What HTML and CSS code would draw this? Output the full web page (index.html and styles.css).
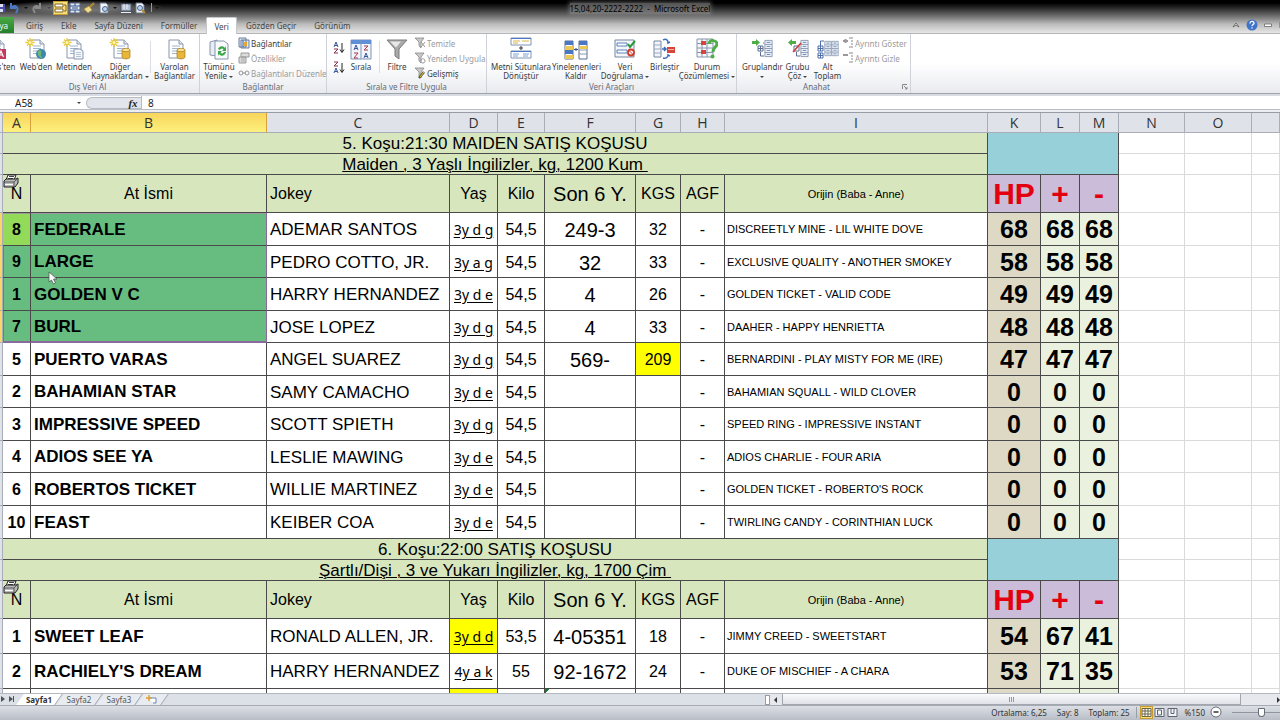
FILE: index.html
```html
<!DOCTYPE html>
<html lang="tr">
<head>
    <meta charset="utf-8">
    <title>15,04,20-2222-2222 - Microsoft Excel</title>
    <meta name="viewport" content="width=device-width, initial-scale=1">
    <link rel="stylesheet" href="styles.css">
</head>
<body>
    <!-- shared icon shapes -->
    <svg class="defs" aria-hidden="true">
        <symbol id="doc" viewBox="0 0 22 24">
            <path d="M5 3h10l4 4v14H5z" fill="#fff" stroke="#8796ad"/>
            <path d="M15 3v4h4" fill="#dfe6f0" stroke="#8796ad"/>
            <path d="M8 9h8M8 11.500h8M8 14h8M8 16.500h6" stroke="#9fb4cf"/>
        </symbol>
        <symbol id="spark" viewBox="0 0 22 24">
            <path d="M5 1v9M.5 5.500h9M2 2.500l6 6M8 2.500l-6 6" stroke="#e9c83a" stroke-width="1.300"/>
            <circle cx="5" cy="5.500" r="1.500" fill="#fff6b0"/>
        </symbol>
        <symbol id="db" viewBox="0 0 22 24">
            <path d="M13 13v7c0 2.500 8 2.500 8 0v-7z" fill="#e9b638" stroke="#a87c1e" stroke-width=".7"/>
            <ellipse cx="17" cy="13" rx="4" ry="1.700" fill="#fbe28b" stroke="#a87c1e" stroke-width=".7"/>
        </symbol>
        <symbol id="funnel" viewBox="0 0 12 12">
            <path d="M1 1h9L7 5v6L5 9V5z" fill="#c9c9c9" stroke="#888" stroke-width=".8"/>
        </symbol>
        <symbol id="rows" viewBox="0 0 10 20">
            <path d="M1 1h8v18H1zM1 5.500h8M1 10h8M1 14.500h8" fill="#eef2f8" stroke="#7c8ba3" stroke-width=".9"/>
            <path d="M3 3.200h4M3 7.700h4M3 12.200h4M3 16.700h4" stroke="#5b82c0"/>
        </symbol>
        <symbol id="printer" viewBox="0 0 16 14">
            <path d="M5 1h8l-2 5H3z" fill="#fff" stroke="#222"/>
            <path d="M6 2.500h5M5 4.500h5" stroke="#444"/>
            <path d="M1 7l2-2h10l2-1v5l-3 4H1z" fill="#b8b8b8" stroke="#222"/>
            <path d="M1 8h10l4-4M11 8v5" fill="none" stroke="#444" stroke-width=".8"/>
            <path d="M2 10.500h8" stroke="#fff"/>
        </symbol>
    </svg>

    <header class="chrome">
        <div class="title-bar">
            <div class="quick">
                <button aria-label="Kaydet"><svg width="6" height="12"><path d="M0 2h5v8H0z" fill="#4b4ba8"/><path d="M0 2h3v3H0zM0 7h3v3H0z" fill="#d8dcf4"/></svg></button>
                <button aria-label="Geri Al"><svg width="13" height="12"><path d="M3 1v5h5M3 6c4-4 9-1 5 5" fill="none" stroke="#4f78c4" stroke-width="2"/></svg></button>
                <i class="caret"></i>
                <button aria-label="Yinele"><svg width="13" height="12"><path d="M9 1v5H4M9 6C5 2 0 5 4 11" fill="none" stroke="#8a8a8a" stroke-width="2"/></svg></button>
                <i class="caret dim"></i>
                <button class="on" aria-label="Dondur"><svg width="13" height="12"><path d="M1 2h8v3H1zM1 7h8v3H1z" fill="#fff" stroke="#7a6526"/><path d="M10 3h2v6h-2" fill="none" stroke="#7a6526"/></svg></button>
                <button aria-label="Birleştir"><svg width="12" height="12"><path d="M1 1h10v10H1z" fill="#dfe6f2" stroke="#5b6980"/><path d="M1 4h10M1 8h10M6 1v3M6 8v3M3 6h6" stroke="#34538c"/></svg></button>
                <button aria-label="Biçim Boyacısı"><svg width="13" height="12"><path d="M1 7l5-3 3 4-4 3z" fill="#f1dc8c" stroke="#a58b34" stroke-width=".6"/><path d="M7 5l4-4" stroke="#b48a30" stroke-width="2"/></svg></button>
                <button aria-label="Önizleme"><svg width="12" height="12"><path d="M2 1h6l2 2v8H2z" fill="#f2f5fa" stroke="#6a7587"/><circle cx="7" cy="7" r="2.500" fill="#b9d2ee" stroke="#4a668c"/></svg></button>
                <i class="caret"></i>
                <button aria-label="Kitap"><svg width="12" height="12"><path d="M1 2h10v7H1z" fill="#b5c0d0" stroke="#48566d"/><path d="M4 2v5M7 2v5M1 10.500h10" stroke="#eef2f8"/></svg></button>
                <button aria-label="Baskı Önizleme"><svg width="12" height="12"><path d="M2 1h6l2 2v8H2z" fill="#f2f5fa" stroke="#6a7587"/><circle cx="6" cy="6" r="2.500" fill="#b9d2ee" stroke="#4a668c"/><path d="M8 8l3 3" stroke="#b48a30" stroke-width="2"/></svg></button>
                <i class="quick-end"></i>
                <i class="caret"></i>
            </div>
            <div class="title"><span>15,04,20-2222-2222 &nbsp;-&nbsp; Microsoft Excel</span></div>
        </div>
        <nav class="tabs">
            <button class="file">Dosya</button>
            <button>Giriş</button>
            <button>Ekle</button>
            <button>Sayfa Düzeni</button>
            <button>Formüller</button>
            <button class="active">Veri</button>
            <button>Gözden Geçir</button>
            <button>Görünüm</button>
            <div class="win-tools">
                <svg width="8" height="8"><path d="M1 6l3-4 3 4-3-2z" fill="#fff" stroke="#555" stroke-width=".8"/></svg>
                <svg width="12" height="12"><circle cx="6" cy="6" r="5.500" fill="#3f74c8"/><path d="M4 4.500c0-3 4-2.500 4-.3 0 1.300-2 1.300-2 2.800M6 8.200v1.400" fill="none" stroke="#fff" stroke-width="1.300"/></svg>
                <svg width="8" height="8"><path d="M.5 3h7v2.500h-7z" fill="#fff" stroke="#666" stroke-width=".8"/></svg>
                <svg width="8" height="8"><path d="M2 1h5v6H2z" fill="#fff" stroke="#666"/></svg>
            </div>
        </nav>
    </header>

    <section class="ribbon">
        <div class="group external">
            <div class="tools">
                <button class="big access"><svg width="22" height="24"><use href="#doc"/><path d="M11 12h10v10H11z" fill="#c33a5f"/><path d="M13.500 20l2.500-6 2.500 6M14.500 18h3" fill="none" stroke="#fff" stroke-width="1.200"/></svg>Access'ten</button>
                <button class="big web"><svg width="22" height="24"><use href="#doc"/><use href="#spark"/><circle cx="16" cy="17" r="5" fill="#3d86ad"/><path d="M13 14c3-2 4 1 3 3s2 3 1 4c-3 0-5-4-4-7z" fill="#6fb772"/></svg>Web'den</button>
                <button class="big text"><svg width="22" height="24"><use href="#doc"/><use href="#spark"/><path d="M12 12h6l3 2v8h-9z" fill="#f5f7fb" stroke="#8796ad"/><path d="M14 15.500h5M14 17.500h5M14 19.500h5" stroke="#b7c4d6"/></svg>Metinden</button>
                <button class="big other"><svg width="22" height="24"><use href="#doc"/><use href="#spark"/><use href="#db"/></svg>Diğer<br>Kaynaklardan <i class="caret"></i></button>
                <span class="split"></span>
                <button class="big existing"><svg width="22" height="24"><use href="#doc"/><use href="#db"/></svg>Varolan<br>Bağlantılar</button>
            </div>
            <div class="caption">Dış Veri Al</div>
        </div>
        <div class="group links">
            <div class="tools">
                <button class="big refresh"><svg width="22" height="24"><path d="M2 5l7-2v16l-7-1z" fill="#e8edf5" stroke="#8796ad"/><path d="M7 4h9l4 3v15H7z" fill="#f8fafc" stroke="#8796ad"/><path d="M10 12c1-3 5-4 7-1l1-2v5h-4l1.500-1.500c-1-2-3-1-3.500.5zM18 15c-1 4-5 5-7 2l-1 2v-5h4l-1.500 1.500c1 1.500 3 1 3.500-.5z" fill="#3da648"/></svg>Tümünü<br>Yenile <i class="caret"></i></button>
                <div class="list">
                    <button><svg width="12" height="12"><path d="M1 1h7v9H1zM3 3h8v8H3z" fill="#e3eaf5" stroke="#667a99"/><path d="M6 5v4h3V5z" fill="#e2a836"/><path d="M5 3v7" stroke="#3c60a0"/></svg>Bağlantılar</button>
                    <button disabled><svg width="12" height="12"><path d="M3 1h8v4H3zM1 5h7v6H1z" fill="#ddd" stroke="#999"/><path d="M3 7h4M3 9h4" stroke="#aaa"/></svg>Özellikler</button>
                    <button disabled><svg width="12" height="12"><path d="M1 6a2 2 0 0 1 4 0 2 2 0 0 1-4 0M7 6a2 2 0 0 1 4 0 2 2 0 0 1-4 0M4 6h4" fill="none" stroke="#999"/></svg>Bağlantıları Düzenle</button>
                </div>
            </div>
            <div class="caption">Bağlantılar</div>
        </div>
        <div class="group sorting">
            <div class="tools">
                <div class="sorts">
                    <button aria-label="A'dan Z'ye Sırala"><svg width="12" height="13"><path d="M1 6l2-5 2 5M2 4.500h2" fill="none" stroke="#35559c"/><path d="M1 8h4l-4 4h4" fill="none" stroke="#8c2f4c"/><path d="M9 2v9M7 8.500l2 3 2-3" fill="none" stroke="#222"/></svg></button>
                    <button aria-label="Z'den A'ya Sırala"><svg width="12" height="13"><path d="M1 1h4l-4 4h4" fill="none" stroke="#8c2f4c"/><path d="M1 12l2-5 2 5M2 10.500h2" fill="none" stroke="#35559c"/><path d="M9 2v9M7 8.500l2 3 2-3" fill="none" stroke="#222"/></svg></button>
                </div>
                <button class="big sort"><svg width="22" height="24"><path d="M1 3h20v19H1z" fill="#f2f5fb" stroke="#7f93b5"/><path d="M1 3h20v4H1z" fill="#5f8fd6"/><path d="M11 3v19" stroke="#7f93b5"/><path d="M4 13l2-5 2 5M4.700 11.500h2.600M14 21l2-5 2 5M14.700 19.500h2.600" fill="none" stroke="#35559c"/><path d="M4 16h4l-4 5h4M14 9h4l-4 4h4" fill="none" stroke="#a83a4c"/></svg>Sırala</button>
                <span class="split"></span>
                <button class="big filter"><svg width="22" height="24"><path d="M1 3h20l-8 9v10l-4-3v-7z" fill="#a9a9a9" stroke="#7a7a7a"/><path d="M4 4.500h11l-5 6z" fill="#e8e8e8"/></svg>Filtre</button>
                <div class="list">
                    <button disabled><svg width="12" height="12"><use href="#funnel"/><path d="M7 5l4 5M11 5l-4 5" stroke="#999"/></svg>Temizle</button>
                    <button disabled><svg width="12" height="12"><use href="#funnel"/><path d="M7 9c0-3 4-3 4 0s-4 2-4 1" fill="none" stroke="#999"/></svg>Yeniden Uygula</button>
                    <button><svg width="12" height="12"><use href="#funnel"/><path d="M5 11l5-6" stroke="#5b5522" stroke-width="2.500"/><path d="M6 10l4-5" stroke="#e2cf4a"/></svg>Gelişmiş</button>
                </div>
            </div>
            <div class="caption">Sırala ve Filtre Uygula</div>
        </div>
        <div class="group data-tools">
            <div class="tools">
                <button class="big columns"><svg width="22" height="24"><path d="M1 1h20v7H1zM1 14h20v7H1z" fill="#fff" stroke="#7f93b5"/><path d="M1 1.500h20M1 14.500h20" stroke="#4d79c4"/><path d="M3 4h7M3 6h5M12 4h7" stroke="#d9b548"/><path d="M3 17h6M3 19h5M13 17h6M13 19h5" stroke="#7da0d8"/><path d="M11 9v4M9 11h4" stroke="#333"/></svg>Metni Sütunlara<br>Dönüştür</button>
                <button class="big duplicates"><svg width="24" height="24"><path d="M1 4h8v18H1zM15 4h8v18h-8z" fill="#fff" stroke="#5c6f92"/><path d="M1 4h8v4H1zM1 13h8v4H1zM15 4h8v4h-8z" fill="#4b76c2"/><path d="M1 9h8v4H1zM1 18h8v4H1zM15 9h8v3h-8z" fill="#ecc954"/><path d="M15 13h8M15 17h8" stroke="#8a9ab5"/><path d="M10 12.500h4M12 11v3" stroke="#34538c"/></svg>Yinelenenleri<br>Kaldır</button>
                <button class="big validate"><svg width="22" height="24"><path d="M1 3h19v17H1z" fill="#f4f6fa" stroke="#77879f"/><path d="M3 6h10v3H3zM3 13h10v3H3z" fill="#fff" stroke="#5b82c0"/><path d="M14 7l2 3 5-6" fill="none" stroke="#2b9a3a" stroke-width="2"/><circle cx="17" cy="15.500" r="3" fill="#fff" stroke="#d33b2c" stroke-width="1.800"/><path d="M15 13.500l4 4" stroke="#d33b2c"/></svg>Veri<br>Doğrulama <i class="caret"></i></button>
                <button class="big merge"><svg width="22" height="24"><path d="M1 4h7v16H1z" fill="#f2f5fb" stroke="#77879f"/><path d="M1 8h7M1 12h7M1 16h7" stroke="#9aa8be"/><path d="M14 10h8v6h-8z" fill="#d9443a"/><path d="M15 12.500h6" stroke="#f4b0a8"/><path d="M9 12h4M11 10l2 2-2 2M10 3c3-2 5 0 5 3l2-1M10 21c3 1 5-1 5-3l2 1" fill="none" stroke="#3d6cb8" stroke-width="1.500"/></svg>Birleştir</button>
                <button class="big whatif"><svg width="22" height="24"><path d="M1 2h16v18H1zM1 6.500h16M1 11h16M1 15.500h16M6 2v18M11 2v18" fill="#f5f7fb" stroke="#8796ad"/><path d="M5 4h5v4H5zM5 13h5v4H5z" fill="#d9443a"/><path d="M13 7c0-5 8-4 8 0 0 3-4 3-4 8" fill="none" stroke="#4cae45" stroke-width="3"/><circle cx="16.500" cy="19.500" r="2" fill="#4cae45"/></svg>Durum<br>Çözümlemesi <i class="caret"></i></button>
            </div>
            <div class="caption">Veri Araçları</div>
        </div>
        <div class="group outline">
            <div class="tools">
                <button class="big grp"><svg width="22" height="24"><use href="#rows" x="13" y="2" width="9" height="19"/><path d="M1 4h4V2l4 3.500L5 9V7H1z" fill="#4cae45"/><path d="M7 9h5v5H7zM9.500 9v5M7 11.500h5M12 6h1M9.500 15v4H13" fill="none" stroke="#5c6f92"/></svg>Gruplandır<br><i class="caret"></i></button>
                <button class="big ungrp"><svg width="22" height="24"><use href="#rows" x="13" y="2" width="9" height="19"/><path d="M9 4H5V2L1 5.500 5 9V7h4z" fill="#4cae45"/><path d="M7 9h5v5H7zM9.500 15v4H13" fill="none" stroke="#5c6f92"/><path d="M6 15l8-9" stroke="#cf3a30" stroke-width="1.500"/></svg>Grubu<br>Çöz <i class="caret"></i></button>
                <button class="big subtotal"><svg width="22" height="24"><use href="#rows" x="7" y="2" width="8" height="19"/><use href="#rows" x="14" y="2" width="8" height="19"/><path d="M1 9h5v5H1zM1 16h5v5H1zM3.500 9v5M1 11.500h5M3.500 16v5M1 18.500h5M3.500 9V4H7" fill="none" stroke="#4d6ea8"/></svg>Alt<br>Toplam</button>
                <div class="list">
                    <button disabled><svg width="12" height="12"><path d="M1 4h5M3.500 2v4" stroke="#999" stroke-width="2"/><path d="M7 1h4M9 4h2M9 7h2M7 10h4" stroke="#888"/></svg>Ayrıntı Göster</button>
                    <button disabled><svg width="12" height="12"><path d="M1 3h5" stroke="#999" stroke-width="2"/><path d="M7 1h4M9 4h2M9 7h2M7 10h4" stroke="#888"/></svg>Ayrıntı Gizle</button>
                </div>
            </div>
            <div class="caption">Anahat <svg class="launcher" width="6" height="6"><path d="M.5 5V.5H5M2 2l3 3M5 3v2H3" fill="none" stroke="#888"/></svg></div>
        </div>
    </section>

    <div class="formula-bar">
        <input class="name-box" type="text" value="A58" aria-label="Ad Kutusu">
        <i class="caret"></i>
        <span class="knob"></span>
        <button class="fx" aria-label="İşlev Ekle">fx</button>
        <input class="formula" type="text" value="8" aria-label="Formül Çubuğu">
    </div>

    <main class="sheet">
        <table>
            <colgroup>
                <col class="c-gutter"><col class="c-a"><col class="c-b"><col class="c-c"><col class="c-d"><col class="c-e"><col class="c-f"><col class="c-g"><col class="c-h"><col class="c-i"><col class="c-k"><col class="c-l"><col class="c-m"><col class="c-n"><col class="c-o"><col>
            </colgroup>
            <thead>
                <tr><th></th><th class="picked">A</th><th class="picked">B</th><th>C</th><th>D</th><th>E</th><th>F</th><th>G</th><th>H</th><th>I</th><th>K</th><th>L</th><th>M</th><th>N</th><th>O</th><th></th></tr>
            </thead>
            <tbody class="race">
                <tr class="race-title"><th></th><td colspan="9" class="head">5. Koşu:21:30 MAIDEN SATIŞ KOŞUSU</td><td colspan="3" rowspan="2" class="blue"></td><td class="free"></td><td class="free"></td><td class="free"></td></tr>
                <tr class="race-title"><th></th><td colspan="9" class="head"><u>Maiden , 3 Yaşlı İngilizler, kg, 1200 Kum&nbsp;</u></td><td class="free"></td><td class="free"></td><td class="free"></td></tr>
                <tr class="labels"><th></th><td><svg class="printer" width="16" height="14"><use href="#printer"/></svg>N</td><td>At İsmi</td><td>Jokey</td><td>Yaş</td><td>Kilo</td><td>Son 6 Y.</td><td>KGS</td><td>AGF</td><td>Orijin (Baba - Anne)</td><td>HP</td><td>+</td><td>-</td><td></td><td></td><td></td></tr>
            </tbody>
            <tbody class="runners">
                <tr class="sel first"><th></th><td>8</td><td>FEDERALE</td><td>ADEMAR SANTOS</td><td>3y d g</td><td>54,5</td><td>249-3</td><td>32</td><td>-</td><td>DISCREETLY MINE - LIL WHITE DOVE</td><td>68</td><td>68</td><td>68</td><td></td><td></td><td></td></tr>
                <tr class="sel"><th></th><td>9</td><td>LARGE<svg class="pointer" width="10" height="14"><path d="M1 1v10l2.500-2 2 4 2-1-2-4h3.500z" fill="#fff" stroke="#555" stroke-width=".8"/></svg></td><td>PEDRO COTTO, JR.</td><td>3y a g</td><td>54,5</td><td>32</td><td>33</td><td>-</td><td>EXCLUSIVE QUALITY - ANOTHER SMOKEY</td><td>58</td><td>58</td><td>58</td><td></td><td></td><td></td></tr>
                <tr class="sel"><th></th><td>1</td><td>GOLDEN V C</td><td>HARRY HERNANDEZ</td><td>3y d e</td><td>54,5</td><td>4</td><td>26</td><td>-</td><td>GOLDEN TICKET - VALID CODE</td><td>49</td><td>49</td><td>49</td><td></td><td></td><td></td></tr>
                <tr class="sel last"><th></th><td>7</td><td>BURL</td><td>JOSE LOPEZ</td><td>3y d g</td><td>54,5</td><td>4</td><td>33</td><td>-</td><td>DAAHER - HAPPY HENRIETTA</td><td>48</td><td>48</td><td>48</td><td></td><td></td><td></td></tr>
                <tr><th></th><td>5</td><td>PUERTO VARAS</td><td>ANGEL SUAREZ</td><td>3y d g</td><td>54,5</td><td>569-</td><td class="mark">209</td><td>-</td><td>BERNARDINI - PLAY MISTY FOR ME (IRE)</td><td>47</td><td>47</td><td>47</td><td></td><td></td><td></td></tr>
                <tr><th></th><td>2</td><td>BAHAMIAN STAR</td><td>SAMY CAMACHO</td><td>3y d e</td><td>54,5</td><td></td><td></td><td>-</td><td>BAHAMIAN SQUALL - WILD CLOVER</td><td>0</td><td>0</td><td>0</td><td></td><td></td><td></td></tr>
                <tr><th></th><td>3</td><td>IMPRESSIVE SPEED</td><td>SCOTT SPIETH</td><td>3y d g</td><td>54,5</td><td></td><td></td><td>-</td><td>SPEED RING - IMPRESSIVE INSTANT</td><td>0</td><td>0</td><td>0</td><td></td><td></td><td></td></tr>
                <tr><th></th><td>4</td><td>ADIOS SEE YA</td><td>LESLIE MAWING</td><td>3y d e</td><td>54,5</td><td></td><td></td><td>-</td><td>ADIOS CHARLIE - FOUR ARIA</td><td>0</td><td>0</td><td>0</td><td></td><td></td><td></td></tr>
                <tr><th></th><td>6</td><td>ROBERTOS TICKET</td><td>WILLIE MARTINEZ</td><td>3y d e</td><td>54,5</td><td></td><td></td><td>-</td><td>GOLDEN TICKET - ROBERTO'S ROCK</td><td>0</td><td>0</td><td>0</td><td></td><td></td><td></td></tr>
                <tr><th></th><td>10</td><td>FEAST</td><td>KEIBER COA</td><td>3y d e</td><td>54,5</td><td></td><td></td><td>-</td><td>TWIRLING CANDY - CORINTHIAN LUCK</td><td>0</td><td>0</td><td>0</td><td></td><td></td><td></td></tr>
            </tbody>
            <tbody class="race">
                <tr class="race-title"><th></th><td colspan="9" class="head">6. Koşu:22:00 SATIŞ KOŞUSU</td><td colspan="3" rowspan="2" class="blue"></td><td class="free"></td><td class="free"></td><td class="free"></td></tr>
                <tr class="race-title"><th></th><td colspan="9" class="head"><u>Şartlı/Dişi , 3 ve Yukarı İngilizler, kg, 1700 Çim&nbsp;</u></td><td class="free"></td><td class="free"></td><td class="free"></td></tr>
                <tr class="labels"><th></th><td><svg class="printer" width="16" height="14"><use href="#printer"/></svg>N</td><td>At İsmi</td><td>Jokey</td><td>Yaş</td><td>Kilo</td><td>Son 6 Y.</td><td>KGS</td><td>AGF</td><td>Orijin (Baba - Anne)</td><td>HP</td><td>+</td><td>-</td><td></td><td></td><td></td></tr>
            </tbody>
            <tbody class="runners tall">
                <tr><th></th><td>1</td><td>SWEET LEAF</td><td>RONALD ALLEN, JR.</td><td class="mark">3y d d</td><td>53,5</td><td>4-05351</td><td>18</td><td>-</td><td>JIMMY CREED - SWEETSTART</td><td>54</td><td>67</td><td>41</td><td></td><td></td><td></td></tr>
                <tr><th></th><td>2</td><td>RACHIELY'S DREAM</td><td>HARRY HERNANDEZ</td><td>4y a k</td><td>55</td><td>92-1672</td><td>24</td><td>-</td><td>DUKE OF MISCHIEF - A CHARA</td><td>53</td><td>71</td><td>35</td><td></td><td></td><td></td></tr>
                <tr><th></th><td></td><td></td><td></td><td class="mark"></td><td></td><td class="warn"></td><td></td><td></td><td></td><td></td><td></td><td></td><td></td><td></td><td></td></tr>
            </tbody>
        </table>
    </main>

    <div class="sheet-tabs">
        <div class="tab-nav">
            <svg width="16" height="8"><path d="M1 1l4 3-4 3zM9 1l4 3-4 3zM13 1h1v6h-1z" fill="#4d5563"/></svg>
        </div>
        <button class="current">Sayfa1</button>
        <button>Sayfa2</button>
        <button>Sayfa3</button>
        <button class="add" aria-label="Çalışma Sayfası Ekle"><svg width="12" height="10"><path d="M3 3h7v5H7" fill="#fff" stroke="#6d83b0"/><path d="M3 0v6M0 3h6" stroke="#e0a030" stroke-width="1.500"/></svg></button>
        <div class="scroll">
            <span class="grip"></span>
            <i class="arrow-left"></i>
            <span class="thumb"></span>
            <i class="arrow-right"></i>
        </div>
    </div>

    <footer class="status">
        <span>Ortalama: 6,25</span>
        <span>Say: 8</span>
        <span>Toplam: 25</span>
        <div class="views">
            <button class="on" aria-label="Normal"><svg width="11" height="11"><path d="M1 1.500h9v8H1zM1 4h9M1 7h9M4 1.500v8M7 1.500v8" fill="#fff" stroke="#6b6440"/></svg></button>
            <button aria-label="Sayfa Düzeni"><svg width="11" height="11"><path d="M1 1.500h9v8H1zM3.500 3h4v5h-4z" fill="#f2f4f8" stroke="#5d6573"/></svg></button>
            <button aria-label="Sayfa Sonu"><svg width="11" height="11"><path d="M1 1.500h9v8H1zM4 1.500v5M7 1.500v5M4 6.500h3" fill="#f2f4f8" stroke="#5d6573"/></svg></button>
        </div>
        <span class="percent">%150</span>
        <button class="minus" aria-label="Uzaklaştır"><svg width="12" height="12"><circle cx="6" cy="6" r="5" fill="#fff" stroke="#666c78"/><path d="M3.500 6h5" stroke="#333" stroke-width="1.500"/></svg></button>
        <input class="zoom" type="range" min="10" max="400" value="255" aria-label="Yakınlaştırma">
    </footer>
</body>
</html>
```
FILE: styles.css
```css
* {
    box-sizing: border-box;
}
body {
    margin: 0;
    height: 100vh;
    display: flex;
    flex-direction: column;
    overflow: hidden;
    background: #fff;
    color: #3b3b3b;
    font-family: "Noto Sans", "Open Sans", sans-serif;
    font-size: 8px;
    line-height: 9px;
}
button, input {
    margin: 0;
    padding: 0;
    border: 0;
    background: none;
    color: inherit;
    font: inherit;
}
svg {
    display: block;
    flex: none;
}
.defs {
    position: absolute;
    width: 0;
    height: 0;
}
.caret {
    display: inline-block;
    flex: none;
    border: 2px solid transparent;
    border-top-color: #444;
    border-bottom: 0;
    vertical-align: middle;
}
.caret.dim {
    opacity: 0.4;
}

/* Title bar and tabs */
.chrome {
    flex: none;
    background: linear-gradient(#000 0, #000 3px, #303030 9px, #777 17px, #bbb 24px, #e6e6e6 33px);
    border-bottom: 1px solid #b4b6ba;
}
.title-bar {
    position: relative;
    height: 17px;
}
.quick {
    display: flex;
    align-items: center;
    gap: 2px;
    width: 165px;
    height: 15px;
    background: radial-gradient(ellipse at center, rgba(150, 150, 150, 0.6) 30%, transparent 70%);
}
.quick .on {
    background: #f8dd7c;
    outline: 1px solid #c99a2c;
}
.quick .caret {
    border-top-color: #111;
    margin: 0 1px;
}
.quick-end {
    width: 1px;
    height: 9px;
    margin-left: 3px;
    background: #999;
}
.title {
    position: absolute;
    top: 4px;
    left: 0;
    right: 0;
    text-align: center;
    color: #000;
}
.title span {
    background: rgba(140, 140, 140, 0.6);
    box-shadow: 0 0 4px 1px rgba(140, 140, 140, 0.6);
}
.tabs {
    display: flex;
    height: 16px;
}
.tabs button {
    padding: 0 9px;
    color: #444;
}
.tabs .file {
    width: 38px;
    margin: 0 3px 0 -24px;
    text-align: right;
    color: #fff;
    background: linear-gradient(#4aa845, #23802b);
    border-radius: 0 2px 0 0;
}
.tabs .active {
    padding: 0 7px;
    margin-bottom: -1px;
    background: #fff;
    border: 1px solid #c5c7ca;
    border-bottom: 0;
    border-radius: 2px 2px 0 0;
}
.win-tools {
    display: flex;
    align-items: center;
    gap: 6px;
    margin: 0 -6px 0 auto;
}

/* Ribbon */
.ribbon {
    display: flex;
    flex: none;
    height: 60px;
    margin-left: -24px;
    background: linear-gradient(#fff 50%, #e8eaef);
    border-bottom: 1px solid #9ea2aa;
}
.group {
    display: flex;
    flex-direction: column;
    justify-content: space-between;
    flex: none;
    border-right: 1px solid #cfd2d8;
}
.tools {
    display: flex;
    padding-top: 3px;
}
.external { width: 224px; }
.links { width: 127px; }
.sorting { width: 160px; }
.data-tools { width: 250px; }
.outline { width: 174px; }
.caption {
    display: flex;
    justify-content: center;
    align-items: center;
    padding-bottom: 2px;
    color: #666b78;
}
.launcher {
    margin-left: 72px;
    margin-right: -78px;
}
.outline .caption {
    padding-right: 14px;
}
.big {
    display: block;
    flex: none;
    white-space: nowrap;
    align-self: flex-start;
}
.big svg {
    margin: 0 auto 1px;
}
.access, .web { width: 40px; }
.text { width: 34px; }
.other { width: 60px; }
.existing { width: 47px; }
.refresh { width: 38px; }
.sort { width: 36px; }
.filter { width: 34px; }
.columns { width: 62px; }
.duplicates { width: 48px; }
.validate { width: 50px; }
.merge { width: 28px; }
.whatif { width: 58px; }
.grp { width: 40px; }
.ungrp { width: 31px; }
.subtotal { width: 29px; }
.data-tools .tools {
    padding-left: 3px;
}
.outline .tools {
    padding-left: 5px;
}
.split {
    width: 1px;
    height: 32px;
    margin-top: 4px;
    background: #dcdee3;
}
.list button {
    display: flex;
    align-items: center;
    gap: 1px;
    height: 15px;
    padding-bottom: 3px;
    white-space: nowrap;
}
.list button:disabled {
    color: #9a9a9a;
}
.sorts {
    display: flex;
    flex-direction: column;
    gap: 7px;
    padding: 4px 0 0 6px;
    width: 16px;
}

/* Formula bar */
.formula-bar {
    display: flex;
    align-items: center;
    flex: none;
    height: 19px;
    padding: 1px 0 2px;
    background: linear-gradient(#d8dbe1 2px, #fff 2px, #fff 15px, #b9bdc5 15px, #b9bdc5 16px, #eceef2 16px);
    border-bottom: 1px solid #989ca6;
    font-size: 10px;
    color: #222;
}
.name-box {
    width: 77px;
    padding-left: 15px;
}
.knob {
    width: 55px;
    height: 12px;
    margin-left: 5px;
    background: #e2e5eb;
    border: 1px solid #b6bac2;
    border-right: 0;
    border-radius: 6px 0 0 6px;
}
.formula-bar .fx {
    width: 16px;
    margin-left: -16px;
    font: italic bold 11px/12px "Liberation Serif", serif;
}
.formula {
    flex: 1;
    min-width: 0;
    height: 13px;
    padding-left: 6px;
    border-left: 1px solid #b6bac2;
}

/* Sheet */
.sheet {
    flex: 1;
    min-height: 0;
    overflow: hidden;
}
table {
    width: 100%;
    table-layout: fixed;
    border-collapse: separate;
    border-spacing: 0;
    color: #000;
    font: 16px/18px "Liberation Sans", Arial, sans-serif;
}
.c-gutter { width: 3px; }
.c-a { width: 28px; }
.c-b { width: 236px; }
.c-c { width: 183px; }
.c-d { width: 48px; }
.c-e { width: 47px; }
.c-f { width: 91px; }
.c-g { width: 45px; }
.c-h { width: 44px; }
.c-i { width: 263px; }
.c-k { width: 53px; }
.c-l, .c-m { width: 39px; }
.c-n { width: 66px; }
.c-o { width: 67px; }
th, td {
    padding: 0;
    border-right: 1px solid #4a4a4a;
    border-bottom: 1px solid #4a4a4a;
    text-align: center;
    white-space: nowrap;
}
th {
    background: #dfe2e9;
    border-color: #a9adb7;
}
thead th {
    height: 20px;
    font: 14px/18px "Open Sans", "Noto Sans", sans-serif;
    color: #333;
}
thead .picked {
    background: linear-gradient(#f8d55d, #fdf07c);
    border-right-color: #d9a13c;
}
.race-title {
    height: 21px;
}
.head, .labels td {
    background: #d8e6be;
}
.head {
    padding-top: 2px;
    font-size: 17px;
}
.head u {
    text-decoration-thickness: 1px;
    text-underline-offset: 1px;
}
.blue {
    background: #98d0da;
}
.free,
.labels td:nth-child(n+14),
.runners td:nth-child(n+14) {
    background: #fff;
    border-color: #dadada;
}
.labels {
    height: 38px;
}
.labels td:nth-child(2) {
    position: relative;
}
.labels td:nth-child(4) {
    padding-left: 3px;
    text-align: left;
}
.labels td:nth-child(7) {
    font-size: 20px;
}
.labels td:nth-child(10) {
    font-size: 11px;
}
.labels td:nth-child(n+11):nth-child(-n+13) {
    background: #cbbcd9;
    color: #e3000f;
    font-size: 30px;
    font-weight: bold;
    line-height: 30px;
}
.printer {
    position: absolute;
    top: -1px;
    left: 0;
}

.runners tr {
    height: 33px;
}
.runners tr:nth-child(even) {
    height: 32px;
}
.runners tr:last-child {
    height: 33px;
}
.runners.tall tr {
    height: 35px;
}
.runners td {
    padding-top: 2px;
}
.runners td:nth-child(2),
.runners td:nth-child(3) {
    padding-top: 1px;
    font-weight: bold;
}
.runners td:nth-child(3),
.runners td:nth-child(4) {
    padding-left: 3px;
    font-size: 17px;
    text-align: left;
}
.runners td:nth-child(5) {
    font-family: "Noto Sans", "Open Sans", sans-serif;
    font-size: 14px;
    text-decoration: underline;
    text-underline-offset: 2px;
}
.runners td:nth-child(7) {
    font-size: 20px;
}
.runners td:nth-child(10) {
    padding-top: 0;
    padding-left: 2px;
    font-size: 11px;
    text-align: left;
}
.runners td:nth-child(n+11):nth-child(-n+13) {
    padding-top: 0;
    background: #ebf1df;
    font-size: 25px;
    font-weight: bold;
    line-height: 26px;
}
.runners td:nth-child(11):nth-child(n) {
    background: #ddd9c5;
}
.runners .mark {
    background: #ffff00;
}
.warn {
    background: linear-gradient(135deg, #1c7a2c 3px, transparent 3px);
}

/* Selected cells */
.sel th {
    background: #fbd565;
}
.sel td:nth-child(2),
.sel td:nth-child(3) {
    background: #67bc80;
}
.sel.first td:nth-child(2) {
    background: #92da57;
}
.sel td:nth-child(2) {
    box-shadow: inset 1px 0 #8a6a9c;
}
.sel td:nth-child(3) {
    position: relative;
    border-right-color: #8a6a9c;
}
.sel.first td:nth-child(2),
.sel.first td:nth-child(3) {
    box-shadow: inset 0 1px #9a9aa0;
}
.sel.last td:nth-child(2),
.sel.last td:nth-child(3) {
    border-bottom: 2px solid #8a6a9c;
}
.pointer {
    position: absolute;
    left: 17px;
    top: 25px;
    z-index: 1;
}

/* Sheet tabs and horizontal scroll bar */
.sheet-tabs {
    display: flex;
    align-items: stretch;
    flex: none;
    height: 12px;
    background: #dce0e7;
    border-top: 1px solid #b4b8c0;
    line-height: 11px;
}
.tab-nav {
    width: 19px;
    padding-top: 1px;
}
.sheet-tabs button {
    position: relative;
    z-index: 0;
    width: 40px;
    color: #555;
}
.sheet-tabs .add {
    width: 26px;
}
.sheet-tabs button::before {
    content: "";
    position: absolute;
    inset: 0 0 0 1px;
    z-index: -1;
    background: #e8ebf0;
    border-right: 1px solid #9da2ac;
    transform: skewX(-35deg);
}
.sheet-tabs .current {
    font-weight: bold;
    color: #333;
}
.sheet-tabs .current::before {
    background: #fff;
}
.sheet-tabs button svg {
    margin: 0 auto;
}
.scroll {
    display: flex;
    align-items: center;
    width: 40%;
    margin-left: auto;
    background: #e6e8ed;
}
.grip {
    width: 5px;
    height: 10px;
    margin-left: -3px;
    background: #fff;
    border: 1px solid #989ca6;
}
.arrow-left, .arrow-right {
    margin: 0 5px 0 4px;
    border: 3px solid transparent;
    border-right-color: #333;
    border-left: 0;
}
.arrow-right {
    margin: 0 0 0 auto;
    border-left: 3px solid #333;
    border-right: 0;
}
.thumb {
    flex: 1;
    height: 11px;
    margin-right: 36px;
    border: 1px solid #a2a6af;
    border-top: 0;
    background: repeating-linear-gradient(90deg, #999 0, #999 1px, transparent 1px, transparent 2px) center / 6px 5px no-repeat, linear-gradient(#fafbfc, #dfe2e8);
}

/* Status bar */
.status {
    display: flex;
    align-items: center;
    justify-content: flex-end;
    gap: 10px;
    flex: none;
    height: 15px;
    padding-bottom: 2px;
    background: linear-gradient(#dcdfe5, #b9bdc6);
    border-top: 1px solid #a6aab3;
    color: #333;
}
.views {
    display: flex;
    gap: 2px;
    margin-left: -4px;
    padding-left: 4px;
    border-left: 1px solid #999da6;
}
.views .on {
    background: #fbdf7c;
    outline: 1px solid #c99a2c;
}
.percent {
    margin: 0 -5px 0 -3px;
}
.zoom {
    appearance: none;
    width: 48px;
    height: 12px;
    background: linear-gradient(#8f949e, #8f949e) center / 100% 1px no-repeat;
}
.zoom::-webkit-slider-thumb {
    appearance: none;
    width: 7px;
    height: 9px;
    background: #fff;
    border: 1px solid #666c78;
    border-radius: 1px 1px 4px 4px;
}
```
